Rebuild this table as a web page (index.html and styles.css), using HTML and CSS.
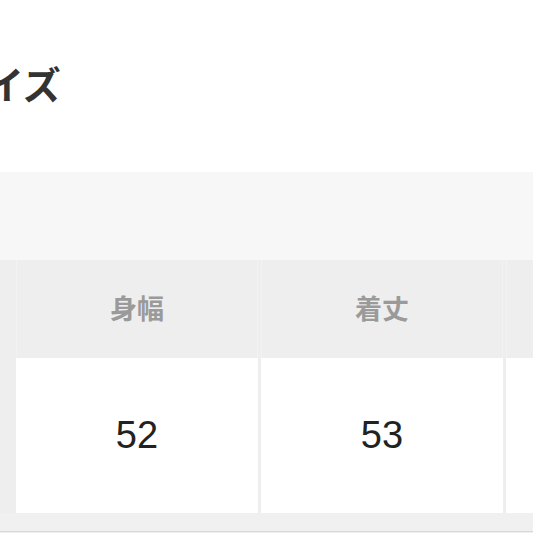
FILE: index.html
```html
<!DOCTYPE html>
<html lang="ja">
<head>
<meta charset="utf-8">
<link rel="stylesheet" href="styles.css">
</head>
<body>
<div class="page">
  <div class="title-area">
    <h2 class="title">サイズ</h2>
  </div>
  <div class="band"></div>
  <div class="table">
    <div class="row head">
      <div class="cell">身幅</div>
      <div class="cell">着丈</div>
      <div class="cell"></div>
    </div>
    <div class="row data">
      <div class="cell">52</div>
      <div class="cell">53</div>
      <div class="cell"></div>
    </div>
    <div class="foot"></div>
  </div>
</div>
</body>
</html>
```
FILE: styles.css
```css
html, body {
  margin: 0;
  padding: 0;
  background: #ffffff;
}
.page {
  width: 533px;
  height: 533px;
  overflow: hidden;
  font-family: "Noto Sans CJK JP", "Noto Sans", sans-serif;
}
.title-area {
  height: 172px;
  box-sizing: border-box;
  padding-bottom: 6px;
  display: flex;
  align-items: center;
  overflow: hidden;
}
.title {
  margin: 0 0 0 -52px;
  font-size: 38px;
  font-weight: 700;
  color: #333333;
  line-height: 1;
  white-space: nowrap;
}
.band {
  height: 88px;
  background: #f7f7f7;
}
.table {
  background: #eeeeee;
  height: 273px;
}
.row {
  display: flex;
  gap: 3px;
  padding-left: 16px;
}
.cell {
  flex: 0 0 242px;
  display: flex;
  align-items: center;
  justify-content: center;
  box-sizing: border-box;
}
.head {
  height: 98px;
}
.head .cell {
  color: #9a9a9a;
  font-size: 27px;
  font-weight: 700;
  padding-bottom: 4px;
  border-left: 1px solid #f2f2f2;
  border-right: 1px solid #f2f2f2;
}
.data {
  height: 155px;
}
.data .cell {
  background: #ffffff;
  font-family: "Liberation Sans", Arial, sans-serif;
  font-size: 38px;
  color: #222222;
}
.foot {
  height: 18px;
  border-bottom: 1px solid #d9d9d9;
  background: #f0f0f0;
}
```
